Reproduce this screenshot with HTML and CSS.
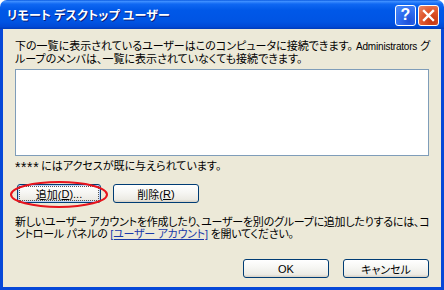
FILE: index.html
```html
<!DOCTYPE html>
<html lang="ja">
<head>
  <meta charset="UTF-8" />
  <title>リモート デスクトップ ユーザー</title>
  <link rel="stylesheet" href="styles.css">
</head>
<body>
  <div class="window">
    <div class="titlebar">
      <span class="title">リモート デスクトップ ユーザー</span>
      <div class="caption-buttons">
        <div class="cap-btn help">?</div>
        <div class="cap-btn close">
          <svg width="13" height="13" viewBox="0 0 13 13">
            <path d="M2 2 L11 11 M11 2 L2 11" stroke="#fff" stroke-width="2.4" stroke-linecap="square"/>
          </svg>
        </div>
      </div>
    </div>

    <div class="frame">
      <p class="intro">下の一覧に表示されているユーザーはこのコンピュータに接続できます。 <span class="latin">Administrators</span> グ<br>ループのメンバは、一覧に表示されていなくても接続できます。</p>

      <div class="listbox"></div>

      <p class="access"><span class="stars">****</span>にはアクセスが既に与えられています。</p>

      <div class="row">
        <div class="marked">
          <button class="btn add focused"><span class="focus-rect">追加(<u>D</u>)...</span></button>
          <svg class="ring" width="102" height="30" viewBox="0 0 102 30">
            <ellipse cx="50" cy="14.5" rx="48" ry="12.5" fill="none" stroke="#e8141c" stroke-width="2"/>
          </svg>
        </div>
        <button class="btn">削除(<u>R</u>)</button>
      </div>

      <p class="note">新しいユーザー アカウントを作成したり、ユーザーを別のグループに追加したりするには、コ<br>ントロール パネルの <a href="#">[ユーザー アカウント]</a> を開いてください。</p>

      <div class="footer">
        <button class="btn">OK</button>
        <button class="btn">キャンセル</button>
      </div>
    </div>
  </div>
</body>
</html>
```

FILE: styles.css
```css
body {
  margin: 0;
  background: #ffffff;
  font-family: "Liberation Sans", "Noto Sans CJK JP", sans-serif;
  font-size: 11px;
}

.window {
  width: 444px;
  height: 290px;
  display: flex;
  flex-direction: column;
  border-radius: 7px 7px 0 0;
  overflow: hidden;
}

.titlebar {
  height: 29px;
  flex-shrink: 0;
  display: flex;
  align-items: center;
  justify-content: space-between;
  padding: 0 5px 0 7px;
  background: linear-gradient(to bottom, #0a5ae0 0%, #3d8eff 5%, #0f68f2 14%, #0058e8 35%, #0054e3 75%, #0049d6 92%, #003bb8 100%);
}

.title {
  color: #ffffff;
  font-weight: bold;
  font-size: 12px;
  letter-spacing: 0.2px;
  text-shadow: 1px 1px 0 #0a1e7a;
  font-family: "Noto Sans CJK JP", sans-serif;
  font-feature-settings: "palt";
}

.caption-buttons {
  display: flex;
  gap: 2px;
  margin-top: 1px;
}

.cap-btn {
  width: 19px;
  height: 19px;
  border: 1px solid #ffffff;
  border-radius: 3px;
  display: flex;
  align-items: center;
  justify-content: center;
  color: #ffffff;
  font-weight: bold;
  font-size: 16px;
  font-family: "Liberation Sans", sans-serif;
}

.help {
  background: radial-gradient(circle at 70% 80%, #1d4fd8 0%, #2f6df0 50%, #4c8bf8 100%);
}

.close {
  background: radial-gradient(circle at 70% 80%, #c4350f 0%, #e15a30 55%, #ec8a6a 100%);
}

.frame {
  flex: 1;
  background: #ece9d8;
  border: 3px solid #0748d8;
  border-top: none;
  padding: 11px 12px 0 12px;
  color: #000000;
}

.intro,
.access,
.note {
  margin: 0;
  line-height: 12px;
  white-space: nowrap;
  font-feature-settings: "palt";
}

.latin {
  font-size: 10px;
  letter-spacing: -0.2px;
}

.listbox {
  margin-top: 4px;
  height: 85px;
  background: #ffffff;
  border: 1px solid #7f9db9;
}

.access {
  margin-top: 4px;
}

.stars {
  font-size: 14px;
  letter-spacing: 0.6px;
  margin-right: 2px;
  vertical-align: -2px;
}

.row {
  display: flex;
  gap: 12px;
  margin-top: 11px;
  padding-left: 2px;
}

.marked {
  position: relative;
}

.ring {
  position: absolute;
  left: -8px;
  top: -4px;
}

.btn {
  width: 86px;
  height: 19px;
  padding: 0;
  font-family: "Liberation Sans", "Noto Sans CJK JP", sans-serif;
  font-size: 11px;
  font-feature-settings: "palt";
  color: #000000;
  border: 1px solid #003c74;
  border-radius: 3px;
  background: linear-gradient(to bottom, #ffffff 0%, #f6f6f3 45%, #ecebe4 85%, #d6d0c5 100%);
  display: flex;
  align-items: center;
  justify-content: center;
}

.btn.add {
  width: 84px;
}

.btn u {
  text-underline-offset: 1px;
}

.focused {
  box-shadow: inset 0 0 0 1px #b9d1fa;
}

.focus-rect {
  display: flex;
  align-items: center;
  justify-content: center;
  width: 78px;
  height: 13px;
  outline: 1px dotted #555555;
}

.note {
  margin-top: 13px;
  letter-spacing: -0.25px;
}

.note a {
  color: #1a3aa8;
  text-decoration: underline;
}

.footer {
  display: flex;
  justify-content: flex-end;
  gap: 14px;
  margin-top: 19px;
}
```
